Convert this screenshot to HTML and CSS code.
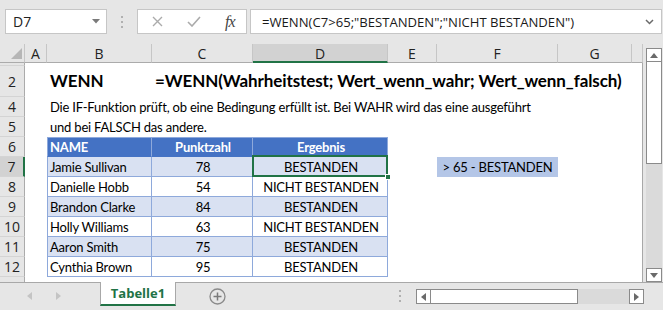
FILE: index.html
```html
<!DOCTYPE html>
<html lang="de">
<head>
	<meta charset="utf-8"/>
	<title>WENN-Funktion</title>
	<link rel="stylesheet" href="styles.css">
</head>
<body>
	<div class="formula-bar">
		<div class="name-box">
			<span>D7</span>
			<svg class="caret" width="8" height="5" viewBox="0 0 8 5"><path d="M0 0h8L4 4.5z" fill="#7a7a7a"/></svg>
		</div>
		<div class="grip"><i></i><i></i><i></i></div>
		<div class="fx-box">
			<svg class="icon-x" width="11" height="11" viewBox="0 0 11 11"><path d="M1 1l9 9M10 1l-9 9" stroke="#ababab" stroke-width="1.4" fill="none"/></svg>
			<svg class="icon-check" width="14" height="11" viewBox="0 0 14 11"><path d="M1 6l4 4 8-9" stroke="#ababab" stroke-width="1.6" fill="none"/></svg>
			<span class="fx">fx</span>
		</div>
		<div class="formula">
			<span>=WENN(C7&gt;65;"BESTANDEN";"NICHT BESTANDEN")</span>
			<svg width="9" height="6" viewBox="0 0 9 6"><path d="M1 1l3.5 3.5L8 1" stroke="#6a6a6a" stroke-width="1.5" fill="none"/></svg>
		</div>
	</div>

	<div class="main">
		<div class="sheet">
			<!-- column headers -->
			<div class="corner"></div>
			<div class="ch">A</div>
			<div class="ch">B</div>
			<div class="ch">C</div>
			<div class="ch sel">D</div>
			<div class="ch">E</div>
			<div class="ch">F</div>
			<div class="ch">G</div>
			<div class="ch"></div>

			<!-- row 1 (nearly hidden) -->
			<div class="rh r1">1</div>
			<div class="rest-a"></div>

			<!-- row 2 -->
			<div class="rh">2</div>
			<div></div>
			<div class="c big">WENN</div>
			<div class="c big span-c">=WENN(Wahrheitstest; Wert_wenn_wahr; Wert_wenn_falsch)</div>

			<!-- rows 4, 5 -->
			<div class="rh">4</div>
			<div></div>
			<div class="c span-b">Die IF-Funktion prüft, ob eine Bedingung erfüllt ist. Bei WAHR wird das eine ausgeführt</div>
			<div class="rh">5</div>
			<div></div>
			<div class="c span-b">und bei FALSCH das andere.</div>

			<!-- table header -->
			<div class="rh">6</div>
			<div></div>
			<div class="c t th first">NAME</div>
			<div class="c t th mid">Punktzahl</div>
			<div class="c t th mid">Ergebnis</div>
			<div class="rest-e"></div>

			<div class="rh sel">7</div>
			<div></div>
			<div class="c t alt first">Jamie Sullivan</div>
			<div class="c t alt mid">78</div>
			<div class="c t alt mid active">BESTANDEN</div>
			<div></div>
			<div class="c note">&gt; 65 - BESTANDEN</div>
			<div class="rest-g"></div>

			<div class="rh">8</div>
			<div></div>
			<div class="c t first">Danielle Hobb</div>
			<div class="c t mid">54</div>
			<div class="c t mid">NICHT BESTANDEN</div>
			<div class="rest-e"></div>

			<div class="rh">9</div>
			<div></div>
			<div class="c t alt first">Brandon Clarke</div>
			<div class="c t alt mid">84</div>
			<div class="c t alt mid">BESTANDEN</div>
			<div class="rest-e"></div>

			<div class="rh">10</div>
			<div></div>
			<div class="c t first">Holly Williams</div>
			<div class="c t mid">63</div>
			<div class="c t mid">NICHT BESTANDEN</div>
			<div class="rest-e"></div>

			<div class="rh">11</div>
			<div></div>
			<div class="c t alt first">Aaron Smith</div>
			<div class="c t alt mid">75</div>
			<div class="c t alt mid">BESTANDEN</div>
			<div class="rest-e"></div>

			<div class="rh">12</div>
			<div></div>
			<div class="c t first">Cynthia Brown</div>
			<div class="c t mid">95</div>
			<div class="c t mid">BESTANDEN</div>
			<div class="rest-e"></div>

			<div class="rh r13"></div>
			<div class="rest-a"></div>
		</div>

		<div class="vscroll">
			<div class="sb-btn"><svg width="8" height="5" viewBox="0 0 8 5"><path d="M0 5h8L4 0z" fill="#6a6a6a"/></svg></div>
			<div class="sb-thumb v"></div>
			<div class="sb-track"></div>
			<div class="sb-btn"><svg width="8" height="5" viewBox="0 0 8 5"><path d="M0 0h8L4 5z" fill="#6a6a6a"/></svg></div>
		</div>
	</div>

	<div class="tabbar">
		<svg class="nav" width="5" height="8" viewBox="0 0 5 8"><path d="M5 0v8L0 4z" fill="#c4c4c4"/></svg>
		<svg class="nav next" width="5" height="8" viewBox="0 0 5 8"><path d="M0 0v8L5 4z" fill="#c4c4c4"/></svg>
		<div class="tab">Tabelle1</div>
		<svg class="add" width="17" height="17" viewBox="0 0 17 17">
			<circle cx="8.5" cy="8.5" r="7.5" stroke="#8a8a8a" stroke-width="1.3" fill="none"/>
			<path d="M8.5 4.5v8M4.5 8.5h8" stroke="#7a7a7a" stroke-width="1.5"/>
		</svg>
		<div class="grip small"><i></i><i></i><i></i></div>
		<div class="hscroll">
			<div class="sb-btn h"><svg width="5" height="8" viewBox="0 0 5 8"><path d="M5 0v8L0 4z" fill="#6a6a6a"/></svg></div>
			<div class="sb-thumb h"></div>
			<div class="sb-track"></div>
			<div class="sb-btn h"><svg width="5" height="8" viewBox="0 0 5 8"><path d="M0 0v8L5 4z" fill="#6a6a6a"/></svg></div>
		</div>
	</div>
</body>
</html>
```

FILE: styles.css
```css
html, body {
	margin: 0;
	padding: 0;
}

body {
	width: 663px;
	height: 310px;
	overflow: hidden;
	background: #e6e6e6;
	font-family: "Open Sans", sans-serif;
	color: #222;
}

/* formula bar */

.formula-bar {
	display: flex;
	align-items: flex-start;
	height: 44px;
	padding: 9px 0 0 5px;
	box-sizing: border-box;
}

.name-box, .fx-box, .formula {
	height: 25px;
	background: #fff;
	border: 1px solid #c6c6c6;
	box-sizing: border-box;
	display: flex;
	align-items: center;
}

.name-box {
	width: 102px;
	padding: 0 6px 0 7px;
	justify-content: space-between;
	font-size: 14px;
}

.grip {
	width: 30px;
	height: 25px;
	display: flex;
	flex-direction: column;
	align-items: center;
	justify-content: center;
	gap: 3px;
}

.grip i {
	display: block;
	width: 2px;
	height: 2px;
	background: #b0b0b0;
}

.fx-box {
	width: 110px;
}

.icon-x {
	margin-left: 14px;
}

.icon-check {
	margin-left: 24px;
}

.fx {
	margin-left: 24px;
	font-family: "Liberation Serif", serif;
	font-style: italic;
	font-size: 16px;
	color: #444;
	letter-spacing: -1px;
}

.formula {
	width: 412px;
	margin-left: 3px;
	padding: 0 7px 0 11px;
	justify-content: space-between;
	font-size: 13.1px;
	color: #1a1a1a;
}

/* sheet */

.main {
	display: flex;
	height: 238px;
}

.sheet {
	width: 643px;
	display: grid;
	grid-template-columns: 25px 22px 105px 101px 135px 49px 121px 74px 11px;
	grid-template-rows: 19px 3px 31px repeat(9, 20px) 5px;
	background: #fff;
	box-shadow: inset -1px 0 #a8a8a8;
}

.corner, .ch, .rh {
	background: #e6e6e6;
	box-sizing: border-box;
	font-size: 14px;
	color: #222;
	display: flex;
	align-items: center;
	justify-content: center;
	overflow: hidden;
}

.corner {
	border-right: 1px solid #c6c6c6;
	border-bottom: 1px solid #ababab;
	position: relative;
}

.corner::after {
	content: "";
	position: absolute;
	right: 2px;
	bottom: 3px;
	width: 11px;
	height: 11px;
	background: #b6b6b6;
	clip-path: polygon(100% 0, 100% 100%, 0 100%);
}

.ch {
	border-right: 1px solid #c6c6c6;
	border-bottom: 1px solid #ababab;
	padding-top: 1px;
}

.ch.sel {
	background: #d2d2d2;
	border-bottom: 2px solid #217346;
}

.rh {
	border-right: 1px solid #ababab;
	border-bottom: 1px solid #d4d4d4;
}

.rh.sel {
	background: #d2d2d2;
	border-right: 2px solid #217346;
}

.rh.r1 {
	align-items: flex-start;
	font-size: 3px;
	color: #e6e6e6;
}

.rh.r13 {
	border-bottom: none;
}

.rest-a { grid-column: 2 / 10; }
.rest-e { grid-column: 6 / 10; }
.rest-g { grid-column: 8 / 10; }
.span-b { grid-column: 3 / 10; }
.span-c { grid-column: 4 / 10; }

.c {
	font-family: Lato, sans-serif;
	font-size: 13px;
	letter-spacing: -0.2px;
	color: #000;
	white-space: nowrap;
	display: flex;
	align-items: flex-end;
	padding: 0 0 2px 3px;
	box-sizing: border-box;
	min-width: 0;
}

.c.big {
	font-size: 17px;
	letter-spacing: -0.1px;
	font-weight: bold;
	padding-bottom: 6px;
}

/* table */

.t {
	border-right: 1px solid #8ea9db;
	border-bottom: 1px solid #8ea9db;
	padding-left: 2px;
	padding-bottom: 1px;
}

.t.first {
	border-left: 1px solid #8ea9db;
}

.t.mid {
	justify-content: center;
}

.t.th {
	background: #4472c4;
	color: #fff;
	font-weight: bold;
	border-top: 1px solid #8ea9db;
	border-bottom-color: #4472c4;
}

.t.alt {
	background: #d9e1f2;
}

.active {
	position: relative;
}

.active::after {
	content: "";
	position: absolute;
	left: -1px;
	top: -2px;
	right: -1px;
	bottom: -1px;
	border: 2px solid #217346;
}

.active::before {
	content: "";
	position: absolute;
	right: -4px;
	bottom: -4px;
	width: 6px;
	height: 6px;
	background: #217346;
	border: 1px solid #fff;
	box-sizing: border-box;
	z-index: 1;
}

.note {
	background: #b4c6e7;
	justify-content: center;
	padding-left: 0;
}

/* scrollbars */

.vscroll {
	width: 16px;
	margin-left: 3px;
	padding-top: 4px;
	display: flex;
	flex-direction: column;
}

.sb-btn {
	height: 14px;
	background: #fff;
	border: 1px solid #8a8a8a;
	box-sizing: border-box;
	display: flex;
	align-items: center;
	justify-content: center;
}

.sb-thumb.v {
	height: 102px;
	background: #fff;
	border: 1px solid #8a8a8a;
	border-top: none;
	box-sizing: border-box;
}

.sb-track {
	flex: 1;
	background: #dadada;
}

/* sheet tabs */

.tabbar {
	height: 28px;
	border-top: 1px solid #a8a8a8;
	box-sizing: border-box;
	display: flex;
	align-items: flex-start;
}

.nav {
	margin: 9px 0 0 27px;
}

.nav.next {
	margin-left: 24px;
}

.tab {
	width: 76px;
	height: 24px;
	margin: -1px 0 0 39px;
	background: #fff;
	border-left: 1px solid #a8a8a8;
	border-right: 1px solid #a8a8a8;
	border-bottom: 2px solid #217346;
	box-sizing: border-box;
	color: #217346;
	font-weight: bold;
	font-size: 13px;
	display: flex;
	align-items: center;
	justify-content: center;
}

.add {
	margin: 5px 0 0 33px;
}

.grip.small {
	width: 18px;
	height: 14px;
	margin: 6px 0 0 165px;
}

.hscroll {
	width: 228px;
	height: 15px;
	margin: 6px 0 0 7px;
	display: flex;
}

.sb-btn.h {
	width: 15px;
	height: 15px;
}

.sb-thumb.h {
	width: 147px;
	background: #fff;
	border: 1px solid #8a8a8a;
	border-left: none;
	box-sizing: border-box;
}
```
